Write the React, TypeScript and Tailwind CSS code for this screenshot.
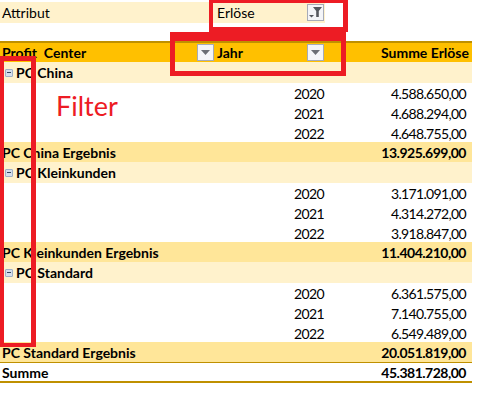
const font = "font-['Lato','Carlito','Liberation_Sans',sans-serif]";

function DropButton({ filtered = false }: { filtered?: boolean }) {
  return (
    <span className="flex h-[17px] w-[17px] shrink-0 items-center justify-center border border-[#a6abb8] bg-[#f4f5f8]">
      {filtered ? (
        <svg width="15" height="15" viewBox="0 0 15 15">
          <path d="M5 2h9l-3.2 4v6H8.2V6z" fill="#55585e" />
          <path d="M1 10h5l-2.5 2.5z" fill="#55585e" />
        </svg>
      ) : (
        <svg width="9" height="5" viewBox="0 0 9 5">
          <path d="M0 0h9L4.5 5z" fill="#6b6e75" />
        </svg>
      )}
    </span>
  );
}

function Minus() {
  return (
    <span className="mr-[3px] ml-[5px] flex h-[8px] w-[8px] shrink-0 items-center justify-center rounded-[1px] border border-[#9db0c8] bg-[#d5deeb]">
      <span className="h-px w-[4px] bg-[#33465f]" />
    </span>
  );
}

function YearRow({ year, value }: { year: number; value: string }) {
  return (
    <div className="flex h-5 items-center text-black tracking-[-0.65px]">
      <span className="ml-[294px] w-[35px]">{year}</span>
      <span className="ml-auto pr-[6px]">{value}</span>
    </div>
  );
}

function Group({ name, rows, total }: { name: string; rows: [number, string][]; total: string }) {
  return (
    <>
      <div className="flex h-[21px] items-center bg-[#fff2cc] font-bold text-black">
        <Minus />
        {name}
      </div>
      <div className="h-[59px]">
        {rows.map(([year, value]) => (
          <YearRow key={year} year={year} value={value} />
        ))}
      </div>
      <div className="flex h-5 items-center justify-between bg-[#ffe699] pr-[6px] pl-[2px] font-bold text-black">
        <span>{name} Ergebnis</span>
        <span className="tracking-[-0.5px]">{total}</span>
      </div>
    </>
  );
}

export default function App() {
  return (
    <div className={`relative h-[409px] w-[490px] overflow-hidden bg-white text-[14px] ${font}`}>
      <div className="w-[472px]">
        {/* filter row */}
        <div className="mt-[2px] flex h-[21px] w-[325px] items-center bg-[#fff2cc] text-black">
          <span className="w-[217px] pl-[2px]">Attribut</span>
          <span>Erlöse</span>
          <span className="mr-[1px] ml-auto">
            <DropButton filtered />
          </span>
        </div>

        {/* header */}
        <div className="mt-[18px] flex h-[21px] items-center border-t-2 border-[#bf9000] bg-[#ffc000] pl-[2px] font-bold text-black">
          <span className="w-[195px]">Profit&nbsp; Center</span>
          <DropButton />
          <span className="w-[93px] pl-[3px]">Jahr</span>
          <DropButton />
          <span className="ml-auto pr-[3px]">Summe Erlöse</span>
        </div>

        <Group
          name="PC China"
          rows={[[2020, '4.588.650,00'], [2021, '4.688.294,00'], [2022, '4.648.755,00']]}
          total="13.925.699,00"
        />
        <Group
          name="PC Kleinkunden"
          rows={[[2020, '3.171.091,00'], [2021, '4.314.272,00'], [2022, '3.918.847,00']]}
          total="11.404.210,00"
        />
        <Group
          name="PC Standard"
          rows={[[2020, '6.361.575,00'], [2021, '7.140.755,00'], [2022, '6.549.489,00']]}
          total="20.051.819,00"
        />

        {/* grand total */}
        <div className="flex h-[21px] items-center justify-between border-t border-b-2 border-[#bf9000] pr-[6px] pl-[2px] font-bold text-black">
          <span>Summe</span>
          <span className="tracking-[-0.5px]">45.381.728,00</span>
        </div>
      </div>

      {/* red annotations drawn over the sheet */}
      <div className="absolute top-[-1px] left-[209px] h-[33px] w-[139px] border-[4px] border-r-[5px] border-b-[5px] border-[#ed1c24]" />
      <div className="absolute top-[32px] left-[170px] h-[44px] w-[176px] border-[5px] border-t-[9px] border-[#ed1c24]" />
      <div className="absolute top-[56px] left-[-1px] h-[291px] w-[37px] border-[5px] border-b-[4px] border-[#ed1c24]" />
      <span className="absolute top-[88px] left-[56px] text-[27px] leading-[36px] text-[#ed1c24]">Filter</span>
    </div>
  );
}
